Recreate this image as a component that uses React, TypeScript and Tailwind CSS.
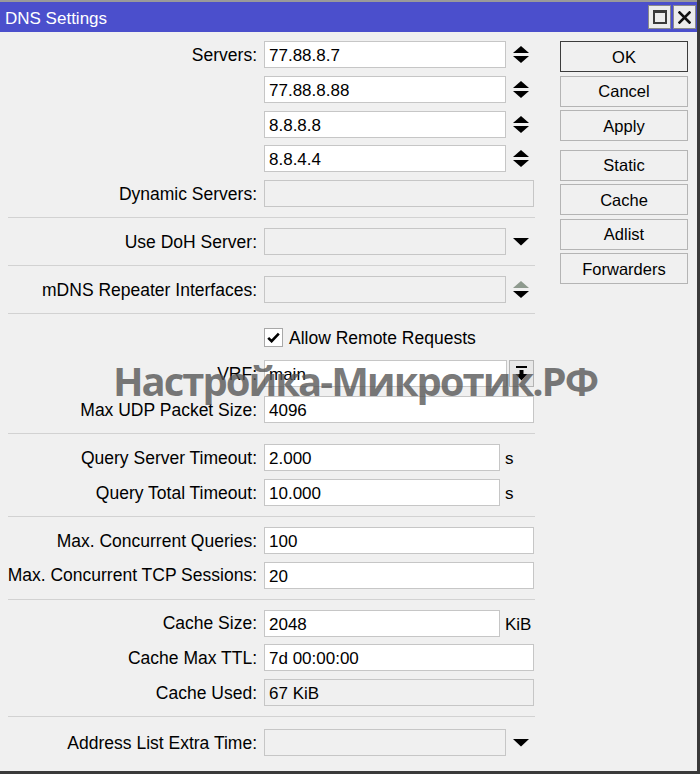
import React from "react";

const SpinIcon = ({ grayUp = false }: { grayUp?: boolean }) => (
  <svg width="16" height="17" viewBox="0 0 16 17" className="block">
    <polygon points="8,0 16,7 0,7" fill={grayUp ? "#8e9a8e" : "#000"} />
    <polygon points="0,10 16,10 8,17" fill="#000" />
  </svg>
);

const DownIcon = () => (
  <svg width="16" height="8" viewBox="0 0 16 8" className="block">
    <polygon points="0,0 16,0 8,7.5" fill="#000" />
  </svg>
);

const Field = ({
  value = "",
  kind = "full",
  disabled = false,
}: {
  value?: string;
  kind?: "full" | "short" | "unit" | "vrf";
  disabled?: boolean;
}) => {
  const widthCls =
    kind === "full"
      ? "w-[270px]"
      : kind === "short"
      ? "w-[242px]"
      : kind === "unit"
      ? "w-[236px]"
      : "w-[243px]";
  return (
    <div
      className={`h-[27px] ${widthCls} border border-[#c6c6c6] ${
        disabled ? "bg-[#f0f0f0]" : "bg-white"
      } flex items-center pl-[4px] pt-[2px] text-black whitespace-nowrap overflow-hidden`}
    >
      {value}
    </div>
  );
};

const Row = ({
  label,
  children,
}: {
  label?: string;
  children: React.ReactNode;
}) => (
  <div className="flex items-center h-[27px]">
    <div className="w-[257px] pt-[2px] text-right text-black whitespace-nowrap text-[17.5px]">{label}</div>
    <div className="ml-[7px] flex items-center">{children}</div>
  </div>
);

const Section = ({
  children,
  last = false,
  gapCls = "gap-[7.75px]",
  ptCls = "pt-[10px]",
}: {
  children: React.ReactNode;
  last?: boolean;
  gapCls?: string;
  ptCls?: string;
}) => (
  <div className="flex flex-col">
    <div className={`flex flex-col ${gapCls} ${ptCls} pb-[10px]`}>{children}</div>
    {!last && <div className="ml-[8px] w-[527px] h-px bg-[#d2d2d2]" />}
  </div>
);

const Btn = ({ label, strong = false, extraCls = "" }: { label: string; strong?: boolean; extraCls?: string }) => (
  <div
    className={`h-[31px] w-[128px] flex items-center justify-center pt-[1px] bg-[#f0f0f0] border ${
      strong ? "border-[#3c3c3c]" : "border-[#b4b4b4]"
    } text-black text-[16.5px] ${extraCls}`}
  >
    {label}
  </div>
);

export default function App() {
  return (
    <div className="w-[700px] h-[774px] bg-[#f0f0f0] relative flex flex-col border-r-[3px] border-b-[3px] border-[#3a3a3a] font-['Liberation_Sans',Arial,sans-serif] text-[17px] leading-none overflow-hidden">
      {/* Title bar */}
      <div className="h-[32px] bg-[#4b4fcc] border-t-2 border-[#9a9a9a] flex items-center justify-between pl-[5px] pr-[1px] shrink-0">
        <span className="text-white text-[17px] pt-[2px]">DNS Settings</span>
        <div className="flex items-center gap-[2px]">
          <div className="w-[23px] h-[24px] bg-[#ececec] border border-[#8a8a8a] flex items-center justify-center">
            <div className="w-[14px] h-[14px] border-2 border-t-[3px] border-[#3a3a3a]" />
          </div>
          <div className="w-[23px] h-[24px] bg-[#ececec] border border-[#8a8a8a] flex items-center justify-center">
            <svg width="13" height="13" viewBox="0 0 13 13">
              <path d="M1.5 1.5 L11.5 11.5 M11.5 1.5 L1.5 11.5" stroke="#111" strokeWidth="2.6" strokeLinecap="square" />
            </svg>
          </div>
        </div>
      </div>

      <div className="flex flex-1">
        {/* Left column */}
        <div className="w-[536px] flex flex-col">
          <Section ptCls="pt-[9px]">
            <Row label="Servers:">
              <Field value="77.88.8.7" kind="short" />
              <div className="ml-[7px]"><SpinIcon /></div>
            </Row>
            <Row>
              <Field value="77.88.8.88" kind="short" />
              <div className="ml-[7px]"><SpinIcon /></div>
            </Row>
            <Row>
              <Field value="8.8.8.8" kind="short" />
              <div className="ml-[7px]"><SpinIcon /></div>
            </Row>
            <Row>
              <Field value="8.8.4.4" kind="short" />
              <div className="ml-[7px]"><SpinIcon /></div>
            </Row>
            <Row label="Dynamic Servers:">
              <Field kind="full" disabled />
            </Row>
          </Section>

          <Section>
            <Row label="Use DoH Server:">
              <Field kind="short" disabled />
              <div className="ml-[7px]"><DownIcon /></div>
            </Row>
          </Section>

          <Section>
            <Row label="mDNS Repeater Interfaces:">
              <Field kind="short" disabled />
              <div className="ml-[7px]"><SpinIcon grayUp /></div>
            </Row>
          </Section>

          <Section gapCls="gap-[9px]">
            <Row>
              <div className="flex items-center">
                <div className="w-[19px] h-[19px] bg-white border border-[#a8a8a8] flex items-center justify-center">
                  <svg width="13" height="11" viewBox="0 0 13 11">
                    <path d="M1.2 5.8 L4.6 9.2 L11.8 1.6" stroke="#000" strokeWidth="2.6" fill="none" />
                  </svg>
                </div>
                <span className="ml-[6px] pt-[2px] text-black text-[17.5px]">Allow Remote Requests</span>
              </div>
            </Row>
            <Row label="VRF:">
              <Field value="main" kind="vrf" />
              <div className="ml-[2px] w-[25px] h-[27px] bg-[#e8e8e8] border border-[#b4b4b4] flex items-center justify-center">
                <svg width="13" height="15" viewBox="0 0 13 15">
                  <rect x="1" y="0" width="11" height="2" fill="#000" />
                  <rect x="4.5" y="4" width="4" height="4" fill="#000" />
                  <polygon points="0.5,8 12.5,8 6.5,14.5" fill="#000" />
                </svg>
              </div>
            </Row>
            <Row label="Max UDP Packet Size:">
              <Field value="4096" kind="full" />
            </Row>
          </Section>

          <Section>
            <Row label="Query Server Timeout:">
              <Field value="2.000" kind="unit" />
              <span className="ml-[5px] pt-[2px] text-black">s</span>
            </Row>
            <Row label="Query Total Timeout:">
              <Field value="10.000" kind="unit" />
              <span className="ml-[5px] pt-[2px] text-black">s</span>
            </Row>
          </Section>

          <Section>
            <Row label="Max. Concurrent Queries:">
              <Field value="100" kind="full" />
            </Row>
            <Row label="Max. Concurrent TCP Sessions:">
              <Field value="20" kind="full" />
            </Row>
          </Section>

          <Section>
            <Row label="Cache Size:">
              <Field value="2048" kind="unit" />
              <span className="ml-[5px] pt-[2px] text-black">KiB</span>
            </Row>
            <Row label="Cache Max TTL:">
              <Field value="7d 00:00:00" kind="full" />
            </Row>
            <Row label="Cache Used:">
              <Field value="67 KiB" kind="full" disabled />
            </Row>
          </Section>

          <Section last ptCls="pt-[12px]">
            <Row label="Address List Extra Time:">
              <Field kind="short" disabled />
              <div className="ml-[7px]"><DownIcon /></div>
            </Row>
          </Section>
        </div>

        {/* Right column buttons */}
        <div className="ml-[24px] pt-[9px] flex flex-col gap-[3.5px]">
          <Btn label="OK" strong />
          <Btn label="Cancel" />
          <Btn label="Apply" />
          <Btn label="Static" extraCls="mt-[5px]" />
          <Btn label="Cache" />
          <Btn label="Adlist" />
          <Btn label="Forwarders" />
        </div>
      </div>

      {/* Watermark overlay */}
      <div className="absolute left-[113px] top-[361px] text-[40px] leading-none font-bold tracking-[-2px] text-[rgba(85,85,85,0.78)] font-['Open_Sans',sans-serif] whitespace-nowrap pointer-events-none">
        Настройка-Микротик.РФ
      </div>
    </div>
  );
}
